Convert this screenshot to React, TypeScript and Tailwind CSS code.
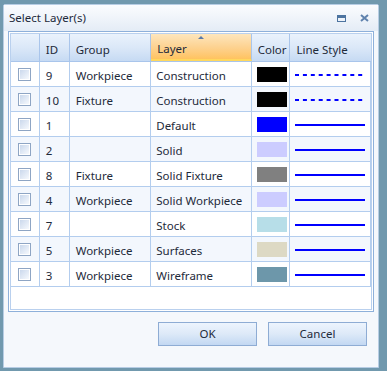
import React from "react";

type Row = {
  id: string;
  group: string;
  layer: string;
  color: string;
  dashed?: boolean;
};

const ROWS: Row[] = [
  { id: "9", group: "Workpiece", layer: "Construction", color: "#000000", dashed: true },
  { id: "10", group: "Fixture", layer: "Construction", color: "#000000", dashed: true },
  { id: "1", group: "", layer: "Default", color: "#0000ff" },
  { id: "2", group: "", layer: "Solid", color: "#ccccff" },
  { id: "8", group: "Fixture", layer: "Solid Fixture", color: "#808080" },
  { id: "4", group: "Workpiece", layer: "Solid Workpiece", color: "#ccccff" },
  { id: "7", group: "", layer: "Stock", color: "#b7dee8" },
  { id: "5", group: "Workpiece", layer: "Surfaces", color: "#ddd9c4" },
  { id: "3", group: "Workpiece", layer: "Wireframe", color: "#6d97aa" },
];

const FONT = { fontFamily: '"Noto Sans", "Open Sans", sans-serif' };

function CheckBox() {
  return (
    <span className="block w-[13px] h-[13px] border border-[#8ea5c4] bg-white p-[1px]">
      <span className="block w-full h-full bg-gradient-to-br from-[#cad8ec] to-[#f6f9fd]" />
    </span>
  );
}

function HeaderCell({
  w,
  label,
  sorted,
  last,
}: {
  w: string;
  label?: string;
  sorted?: boolean;
  last?: boolean;
}) {
  return (
    <div
      className={`${w} relative h-full flex items-center pl-[6px] pt-[5px] ${
        last ? "" : "border-r border-[#a9c5eb]"
      } ${
        sorted
          ? "bg-gradient-to-b from-[#fde6bd] via-[#fdd393] to-[#ffc35f] border-b-2 border-b-[#ffd85e]"
          : "bg-gradient-to-b from-[#eaf2fc] via-[#dbe8f8] to-[#c6daf3]"
      }`}
    >
      {sorted && (
        <span className="absolute left-1/2 top-[2px] -translate-x-1/2 w-0 h-0 border-l-[3px] border-r-[3px] border-b-[3px] border-l-transparent border-r-transparent border-b-[#5a7aa8]" />
      )}
      {label && <span className="text-[11.5px] text-[#1e2a3a] leading-none">{label}</span>}
    </div>
  );
}

function LineStyle({ dashed }: { dashed?: boolean }) {
  return (
    <svg width="72" height="4" viewBox="0 0 72 4">
      <line
        x1="1"
        y1="2"
        x2="71"
        y2="2"
        stroke="#0000ff"
        strokeWidth="2"
        strokeDasharray={dashed ? "4 3.9" : undefined}
      />
    </svg>
  );
}

function DialogButton({ label }: { label: string }) {
  return (
    <button
      type="button"
      className="w-[99px] h-[24px] border border-[#8eacd4] bg-gradient-to-b from-[#edf4fd] via-[#dde9f8] to-[#c2d8f2] text-[11.5px] text-[#1e2a3a] flex items-center justify-center"
    >
      {label}
    </button>
  );
}

export default function App() {
  return (
    <div
      className="w-[387px] h-[371px] bg-[#7199ae] pt-[4px] pl-[3px] pr-[8px] pb-[3px]"
      style={FONT}
    >
      <div className="w-full h-full border border-[#b7cde4] bg-[#f5f8fc] flex flex-col rounded-tl-[2px] rounded-tr-[2px]">
        {/* title bar */}
        <div className="h-[26px] shrink-0 flex items-center justify-between pl-[5px] pr-[9px] bg-gradient-to-b from-[#fbfcfe] to-[#e4ecf6]">
          <span className="text-[11.5px] text-[#1e2a3a]">Select Layer(s)</span>
          <div className="flex items-center gap-[14px]">
            <span className="block w-[9px] h-[7px] border border-[#4d74a0] border-t-[3px]" />
            <svg width="9" height="8" viewBox="0 0 9 8">
              <path d="M1 1 L8 7 M8 1 L1 7" stroke="#5f82ad" strokeWidth="2" />
            </svg>
          </div>
        </div>

        {/* grid */}
        <div className="mx-[4px] h-[281px] border border-[#8eb0da] bg-white p-[1px]">
          <div className="h-full border border-[#b9d0ee] flex flex-col bg-white">
            <div className="h-[28px] shrink-0 flex border-b border-[#a9c5eb]">
              <HeaderCell w="w-[29px]" />
              <HeaderCell w="w-[30px]" label="ID" />
              <HeaderCell w="w-[82px]" label="Group" />
              <HeaderCell w="w-[101px]" label="Layer" sorted />
              <HeaderCell w="w-[39px]" label="Color" />
              <HeaderCell w="w-[81px]" label="Line Style" last />
            </div>
            {ROWS.map((r, i) => (
              <div
                key={r.id}
                className={`h-[25px] shrink-0 flex border-b border-[#b3cdee] text-[11.5px] text-[#1e2a3a] ${
                  i % 2 === 1 ? "bg-[#f3f7fd]" : "bg-white"
                }`}
              >
                <div className="w-[29px] flex items-center justify-center pt-[1px] border-r border-[#b3cdee]">
                  <CheckBox />
                </div>
                <div className="w-[30px] flex items-center pl-[6px] pt-[3px] border-r border-[#b3cdee]">{r.id}</div>
                <div className="w-[82px] flex items-center pl-[6px] pt-[3px] border-r border-[#b3cdee]">{r.group}</div>
                <div className="w-[101px] flex items-center pl-[5px] pt-[3px] border-r border-[#b3cdee]">{r.layer}</div>
                <div className="w-[39px] flex items-center pl-[5px] pt-[1px] border-r border-[#b3cdee]">
                  <span className="block w-[30px] h-[15px]" style={{ backgroundColor: r.color }} />
                </div>
                <div className="w-[81px] flex items-center pl-[4px] pt-[1px] border-r border-[#b3cdee]">
                  <LineStyle dashed={r.dashed} />
                </div>
              </div>
            ))}
          </div>
        </div>

        {/* buttons */}
        <div className="flex justify-end gap-[11px] pr-[11px] mt-[10px]">
          <DialogButton label="OK" />
          <DialogButton label="Cancel" />
        </div>
      </div>
    </div>
  );
}
